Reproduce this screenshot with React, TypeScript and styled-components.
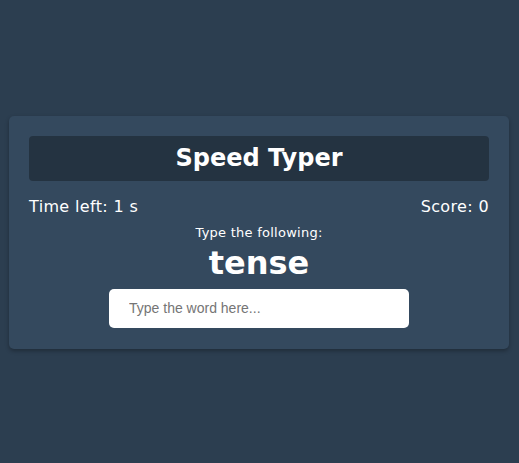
import React, { useState } from "react";
import styled, { createGlobalStyle } from "styled-components";

const GlobalStyle = createGlobalStyle`
  html, body {
    margin: 0;
    padding: 0;
  }
  body {
    background: #2c3e50;
    font-family: "DejaVu Sans", Verdana, sans-serif;
    color: #ffffff;
  }
`;

const Page = styled.div`
  min-height: 100vh;
  box-sizing: border-box;
  padding: 1px 1px 0 0;
  display: flex;
  align-items: center;
  justify-content: center;
`;

const Card = styled.div`
  width: 500px;
  box-sizing: border-box;
  padding: 20px 20px 21px;
  background: #34495e;
  border-radius: 5px;
  box-shadow: 0 2px 4px rgba(0, 0, 0, 0.3);
  display: flex;
  flex-direction: column;
  align-items: center;
`;

const Title = styled.h1`
  margin: 0 0 16.5px;
  width: 100%;
  box-sizing: border-box;
  padding: 8px 0;
  line-height: 29px;
  font-size: 24px;
  font-weight: bold;
  text-align: center;
  background: rgba(0, 0, 0, 0.3);
  border-radius: 4px;
`;

const StatusRow = styled.div`
  width: 100%;
  display: flex;
  justify-content: space-between;
  font-size: 16px;
  letter-spacing: 0.35px;
  margin-bottom: 9px;
`;

const Prompt = styled.small`
  font-size: 13px;
  letter-spacing: 0.25px;
  margin-bottom: 3.5px;
`;

const Word = styled.div`
  font-size: 32px;
  font-weight: bold;
  margin-bottom: 7px;
`;

const WordInput = styled.input`
  width: 300px;
  height: 39px;
  box-sizing: border-box;
  border: none;
  border-radius: 5px;
  padding: 0 20px;
  font-family: "Liberation Sans", Arial, sans-serif;
  font-size: 14px;
  color: #222;
  background: #ffffff;
  outline: none;
  &::placeholder {
    color: #757575;
  }
`;

export default function App() {
  const [text, setText] = useState("");
  return (
    <>
      <GlobalStyle />
      <Page>
        <Card>
          <Title>Speed Typer</Title>
          <StatusRow>
            <span>Time left: 1 s</span>
            <span>Score: 0</span>
          </StatusRow>
          <Prompt>Type the following:</Prompt>
          <Word>tense</Word>
          <WordInput
            type="text"
            placeholder="Type the word here..."
            value={text}
            onChange={(e) => setText(e.target.value)}
          />
        </Card>
      </Page>
    </>
  );
}
